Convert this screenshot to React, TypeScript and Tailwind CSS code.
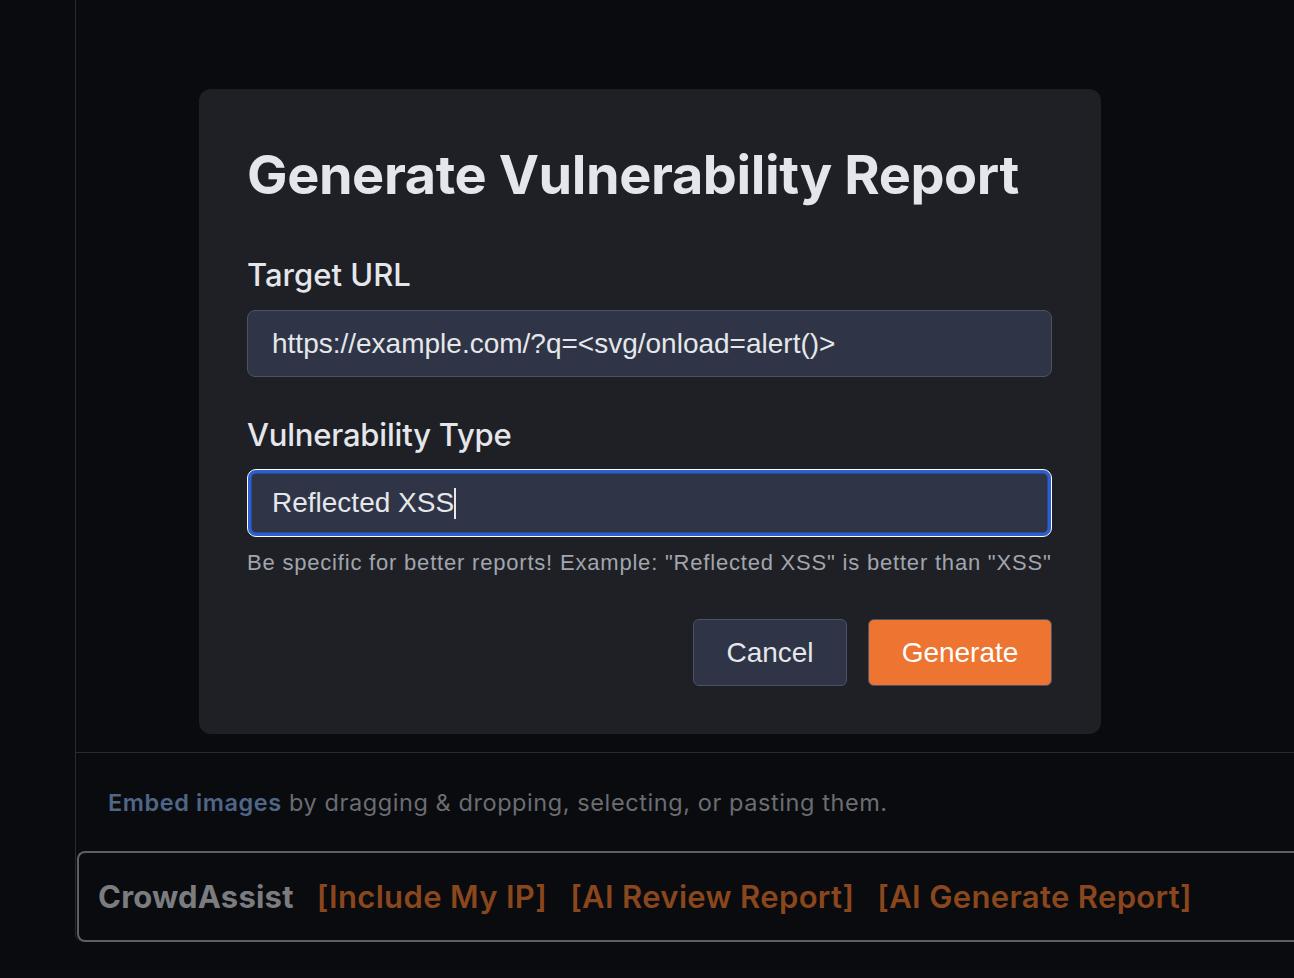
import React from "react";

const inter = { fontFamily: "Inter, 'Noto Sans', sans-serif" };
const arial = { fontFamily: "'Liberation Sans', Arial, sans-serif" };

export default function App() {
  return (
    <div className="relative w-[1294px] h-[978px] bg-[#0a0b0e] overflow-hidden flex items-start">
      <div className="w-[75px] shrink-0" />
      <div className="flex-1 border-l border-[#2a2b2f] flex flex-col rounded-bl-[8px]">
        <div className="h-[753px] border-b border-[#2a2b2f]" />
        <div className="pl-[32px] pt-[38px] text-[23.5px] leading-none text-[#6b6d72] tracking-[0.58px] whitespace-nowrap" style={inter}>
          <span className="font-semibold text-[#4f6687]">Embed images</span> by dragging &amp; dropping, selecting, or pasting them.
        </div>
        <div className="ml-[1px] mt-[36px] h-[91px] border-2 border-r-0 border-[#5e5f62] rounded-l-[8px] flex items-center pl-[19px] gap-[23px] text-[31px] leading-none whitespace-nowrap" style={inter}>
          <span className="font-bold text-[#7b7c80] tracking-[0.2px]">CrowdAssist</span>
          <span className="font-semibold text-[#8a461c] tracking-[0.35px]">[Include My IP]</span>
          <span className="font-semibold text-[#8a461c] tracking-[0.35px]">[AI Review Report]</span>
          <span className="font-semibold text-[#8a461c] tracking-[0.35px]">[AI Generate Report]</span>
        </div>
      </div>

      <div className="absolute left-[199px] top-[89px] w-[902px] h-[645px] rounded-[12px] bg-[#1e2025] pl-[48px] pr-[49px] pt-[59px] flex flex-col">
        <div className="text-[54px] leading-none font-bold text-[#e4e6eb] tracking-[-0.4px] whitespace-nowrap" style={inter}>
          Generate Vulnerability Report
        </div>
        <div className="mt-[57px] text-[31px] leading-none font-medium text-[#e4e6eb]" style={inter}>
          Target URL
        </div>
        <div className="mt-[20px] h-[67px] rounded-[8px] border-[1.5px] border-[#4b5264] bg-[#2f3546] flex items-center pl-[24px] text-[28px] text-[#e5e7eb]" style={arial}>
          https://example.com/?q=&lt;svg/onload=alert()&gt;
        </div>
        <div className="mt-[42px] text-[31px] leading-none font-medium text-[#e4e6eb] tracking-[-0.2px]" style={inter}>
          Vulnerability Type
        </div>
        <div className="mt-[19px] h-[68px] rounded-[9px] border-[1.5px] border-white bg-[#2f3546] shadow-[inset_0_0_0_3.5px_#2b5fd0] flex items-center pl-[24px] text-[28px] text-[#e5e7eb]" style={arial}>
          <span>Reflected XSS</span>
          <span className="inline-block w-[1.5px] h-[31px] bg-[#e5e7eb]" />
        </div>
        <div className="mt-[15px] text-[22px] leading-none text-[#a1a5ad] whitespace-nowrap tracking-[0.8px]" style={arial}>
          Be specific for better reports! Example: "Reflected XSS" is better than "XSS"
        </div>
        <div className="mt-[45px] flex justify-end gap-[21px]">
          <div className="w-[154px] h-[67px] rounded-[6px] border-[1.5px] border-[#4b5264] bg-[#2f3546] flex items-center justify-center text-[28px] text-[#e5e7eb]" style={arial}>
            Cancel
          </div>
          <div className="w-[184px] h-[67px] rounded-[6px] border-[1.5px] border-[#4b5264] bg-[#ed7431] flex items-center justify-center text-[28px] text-white" style={arial}>
            Generate
          </div>
        </div>
      </div>
    </div>
  );
}
